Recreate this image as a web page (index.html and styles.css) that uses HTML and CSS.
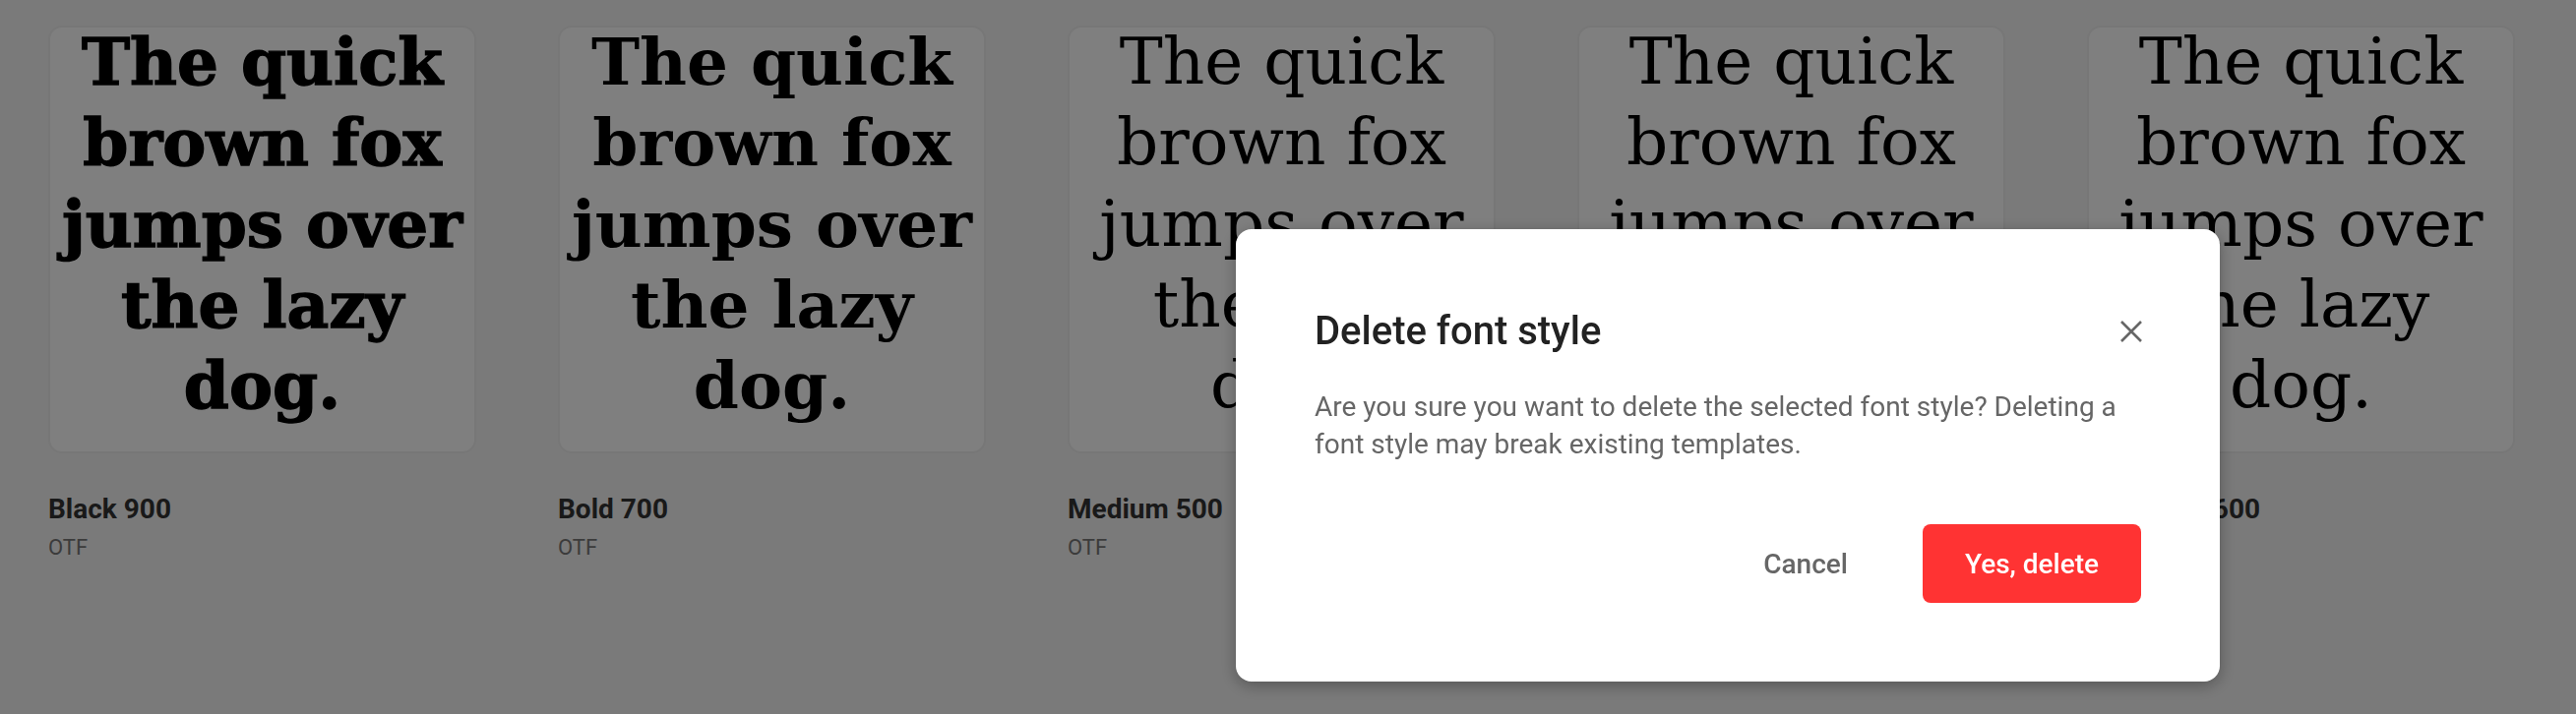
FILE: index.html
```html
<!DOCTYPE html>
<html lang="en">
<head>
    <meta charset="UTF-8">
    <title>Font styles</title>
    <link rel="stylesheet" href="styles.css">
</head>
<body>
    <div class="styles-grid">
        <div class="style-item">
            <div class="preview"><p class="sample black">The quick brown fox jumps over the lazy dog.</p></div>
            <div class="style-name">Black 900</div>
            <div class="style-format">OTF</div>
        </div>
        <div class="style-item">
            <div class="preview"><p class="sample bold">The quick brown fox jumps over the lazy dog.</p></div>
            <div class="style-name">Bold 700</div>
            <div class="style-format">OTF</div>
        </div>
        <div class="style-item">
            <div class="preview"><p class="sample">The quick brown fox jumps over the lazy dog.</p></div>
            <div class="style-name">Medium 500</div>
            <div class="style-format">OTF</div>
        </div>
        <div class="style-item">
            <div class="preview"><p class="sample">The quick brown fox jumps over the lazy dog.</p></div>
            <div class="style-name">Regular 400</div>
            <div class="style-format">OTF</div>
        </div>
        <div class="style-item">
            <div class="preview"><p class="sample">The quick brown fox jumps over the lazy dog.</p></div>
            <div class="style-name">SemiBold 600</div>
            <div class="style-format">OTF</div>
        </div>
    </div>

    <div class="overlay"></div>

    <div class="dialog">
        <div class="dialog-header">
            <h2>Delete font style</h2>
            <button class="close-btn" type="button" aria-label="Close">
                <svg width="24" height="24" viewBox="0 0 24 24"><path d="M2 2 L22 22 M22 2 L2 22" stroke="#666" stroke-width="2.6" fill="none"/></svg>
            </button>
        </div>
        <p class="dialog-text">Are you sure you want to delete the selected font style? Deleting a font style may break existing templates.</p>
        <div class="dialog-actions">
            <button class="btn-cancel" type="button">Cancel</button>
            <button class="btn-delete" type="button">Yes, delete</button>
        </div>
    </div>
</body>
</html>
```
FILE: styles.css
```css
body {
    margin: 0;
    background: #f5f5f5;
    font-family: Roboto, "Liberation Sans", sans-serif;
    height: 726px;
    overflow: hidden;
}
.styles-grid {
    display: grid;
    grid-template-columns: repeat(5, 435px);
    column-gap: 83px;
    padding: 26px 0 0 49px;
}
.preview {
    height: 435px;
    box-sizing: border-box;
    background: #fff;
    border: 2px solid #eee;
    border-radius: 14px;
}
.sample {
    width: 418px;
    margin: -6px auto 0;
    font-family: "DejaVu Serif", serif;
    font-size: 66px;
    line-height: 82.3px;
    text-align: center;
    color: #000;
}
.sample.bold {
    font-weight: 700;
}
.sample.black {
    font-weight: 700;
    -webkit-text-stroke: 1.4px #000;
}
.style-name {
    margin-top: 37px;
    font-size: 28px;
    line-height: 39px;
    font-weight: 700;
    color: #333;
}
.style-format {
    margin-top: 4px;
    font-size: 22px;
    line-height: 31px;
    color: #777;
}
.overlay {
    position: fixed;
    inset: 0;
    background: rgba(0, 0, 0, 0.5);
}
.dialog {
    position: fixed;
    left: 1256px;
    top: 233px;
    width: 1000px;
    box-sizing: border-box;
    padding: 80px;
    background: #fff;
    border-radius: 16px;
    box-shadow: 0 4px 16px rgba(0, 0, 0, 0.3);
}
.dialog-header {
    display: flex;
    align-items: center;
    justify-content: space-between;
}
.dialog-header h2 {
    margin: 0;
    font-size: 40px;
    line-height: 48px;
    font-weight: 500;
    color: #222;
}
.close-btn {
    border: none;
    background: none;
    padding: 0;
    width: 24px;
    height: 24px;
    margin-right: -2px;
    cursor: pointer;
}
.close-btn svg {
    display: block;
}
.dialog-text {
    margin: 34px 0 0;
    font-size: 28px;
    line-height: 37.6px;
    color: #666;
}
.dialog-actions {
    display: flex;
    justify-content: flex-end;
    gap: 36px;
    margin-top: 63px;
}
.dialog-actions button {
    height: 80px;
    border: none;
    border-radius: 8px;
    font-family: Roboto, "Liberation Sans", sans-serif;
    font-size: 28px;
    font-weight: 500;
    cursor: pointer;
}
.btn-cancel {
    padding: 0 40px;
    background: none;
    color: #666;
}
.btn-delete {
    padding: 0 43px;
    background: #ff3333;
    color: #fff;
}
```
